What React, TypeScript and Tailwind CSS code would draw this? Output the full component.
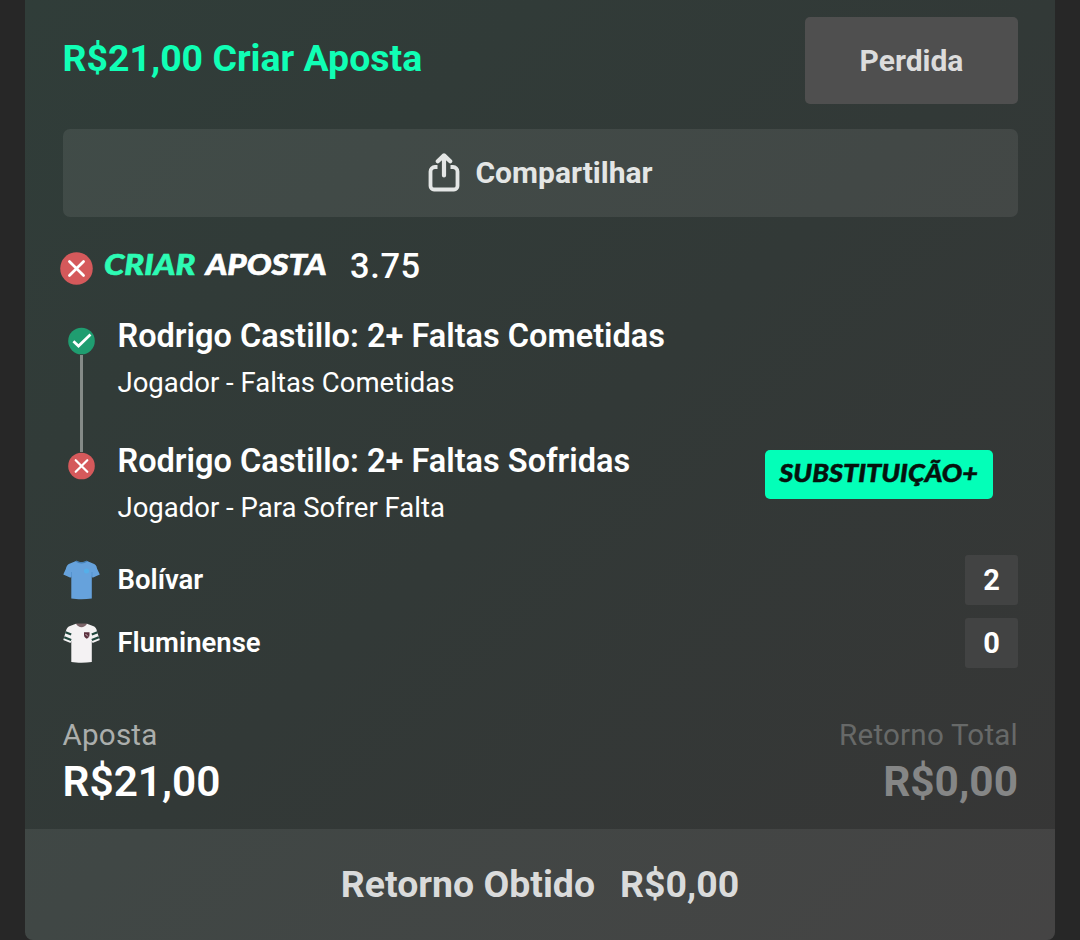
import React from 'react';

type Result = 'won' | 'lost';

interface Selection {
  title: string;
  market: string;
  result: Result;
  tag?: string;
}

const selections: Selection[] = [
  { title: 'Rodrigo Castillo: 2+ Faltas Cometidas', market: 'Jogador - Faltas Cometidas', result: 'won' },
  { title: 'Rodrigo Castillo: 2+ Faltas Sofridas', market: 'Jogador - Para Sofrer Falta', result: 'lost', tag: 'SUBSTITUIÇÃO+' },
];

const ResultIcon = ({ result, className }: { result: Result; className?: string }) => (
  <svg viewBox="0 0 28 28" fill="none" className={className}>
    <circle cx="14" cy="14" r="13.8" fill={result === 'won' ? '#1f9d70' : '#d5595b'} />
    {result === 'won' ? (
      <path d="M5.6 14.2l5.3 5 12.4-12" stroke="#fff" strokeWidth="2.8" />
    ) : (
      <path d="M8 8l12 12M20 8L8 20" stroke="#fff" strokeWidth="2.3" strokeLinecap="round" />
    )}
  </svg>
);

const ShareIcon = ({ className }: { className?: string }) => (
  <svg viewBox="0 0 32 40" fill="none" stroke="#e4e6e5" strokeWidth="3.8" className={className}>
    <path d="M9.5 14H7a4.5 4.5 0 0 0-4.5 4.5V33A3.5 3.5 0 0 0 6 36.500h20a3.5 3.5 0 0 0 3.500-3.500V18.500A4.500 4.500 0 0 0 25 14h-2.500" />
    <path d="M16 22.500V3.500M9.800 8.200L16 2.400l6.200 5.800" strokeWidth="4.200" strokeLinecap="round" strokeLinejoin="round" />
  </svg>
);

const BolivarShirt = () => (
  <svg viewBox="0 0 37 40" className="h-10 w-[37px]">
    <path d="M13 1L7 3.500C4.500 4.500 3.500 6 2.800 9L.3 14.500l7.200 3.200.8-1.500V38.500c6 1 14 1 20.500 0V16.200l.8 1.500 7.200-3.200L34 8.500C33.500 5.500 32.500 4.500 30 3.500L24 1c-3 1.500-8 1.500-11 0z" fill="#66a2dc" />
    <path d="M13 1c3 2.600 8 2.600 11 0" stroke="#4681b8" strokeWidth="1.200" fill="none" />
    <path d="M8.500 12v5M29 12v5" stroke="#4d8cc8" strokeWidth=".7" />
    <circle cx="23.500" cy="11" r="2.500" fill="#55afe9" />
  </svg>
);

const FluminenseShirt = () => (
  <svg viewBox="0 0 37 40" className="h-10 w-[37px]">
    <path d="M13 .8L7 3C4.500 4 3.500 5.500 2.800 8.500L.3 17l7.200 3 .8-2V39c6 1 14 1 20.500 0V18l.8 2 7.200-3L34 8.500C33.500 5.500 32.500 4 30 3L24 .8c-3 2-8 2-11 0z" fill="#f4f2f3" />
    <path d="M2.500 9.300l5.700 2.200M34.500 9.300l-5.700 2.200" stroke="#20473d" strokeWidth="2.300" />
    <path d="M1.200 14.300l7 2.700M35.800 14.300l-7 2.700" stroke="#20473d" strokeWidth="2.300" />
    <path d="M13 .6c2.500 5 8.500 5 11 0z" fill="#7b6468" />
    <path d="M21 9.300h5.500v2.700c0 1.800-1.200 2.900-2.700 3.700C22.200 14.900 21 13.800 21 12z" fill="#5b2f3d" />
    <path d="M22.500 11l2.500 2.500" stroke="#d8c9cc" strokeWidth=".9" />
  </svg>
);

const teams = [
  { name: 'Bolívar', score: 2, shirt: <BolivarShirt /> },
  { name: 'Fluminense', score: 0, shirt: <FluminenseShirt /> },
];

const App: React.FC = () => {
  return (
    <div className="h-[940px] w-[1080px] overflow-hidden bg-[#272727] px-[25px] font-['Roboto',sans-serif] text-white">
      <div className="flex h-full flex-col overflow-hidden rounded-b-lg bg-gradient-to-br from-[#303d39] via-[#323937] to-[#373636]">
        <div className="flex flex-1 flex-col pr-[37px] pl-[38px]">
          {/* Header */}
          <header className="mt-[17px] flex h-[87px] justify-between">
            <h1 className="mt-[17px] -ml-[0.5px] text-[37.450px] leading-[48px] font-bold whitespace-nowrap text-[#10ffb5]">R$21,00 Criar Aposta</h1>
            <div className="flex w-[213px] items-center justify-center rounded-[5px] bg-[#4f4f4f] text-[30px] font-bold text-[#dcdcdc]">
              Perdida
            </div>
          </header>

          <button className="mt-[25px] flex h-[88px] w-full shrink-0 items-center justify-center gap-[15px] rounded-[7px] bg-white/8 text-[30px] font-bold text-[#e4e6e5]">
            <ShareIcon className="h-10 w-8" />
            <span className="-mt-0.5">Compartilhar</span>
          </button>

          {/* Bet type and odds */}
          <div className="-ml-[3px] mt-[31px] flex h-10 items-center">
            <ResultIcon result="lost" className="size-[33px]" />
            <div className="-mt-2 ml-[11px] flex w-[222px] origin-left scale-x-[1.135] gap-[9px] font-['Lato',sans-serif] text-[29px] font-black italic [-webkit-text-stroke:0.6px]">
              <span className="text-[#2dfbb4]">CRIAR</span>
              <span>APOSTA</span>
            </div>
            <span className="-mt-0.5 ml-6 text-[34.500px] font-medium tracking-[0.600px]">3.75</span>
          </div>

          {/* Selections */}
          <div className="mt-[25px] flex flex-col">
            {selections.map((s, i) => (
              <div key={s.title} className={i === 0 ? 'flex h-[125px]' : 'flex h-[94px]'}>
                <div className="ml-[5px] flex w-[27px] flex-col items-center pt-[14px]">
                  <ResultIcon result={s.result} className="h-7 w-[27px] shrink-0" />
                  {i < selections.length - 1 && <div className="-mb-[14px] w-[3px] flex-1 bg-[#858b88]" />}
                </div>
                <div className="mt-px ml-[22.500px] flex-1 whitespace-nowrap">
                  <h2 className="text-[32.500px] leading-[44px] font-semibold">{s.title}</h2>
                  <p className="mt-1.5 text-[27.500px] leading-[38px]">{s.market}</p>
                </div>
                {s.tag && (
                  <div className="mt-3 mr-[25px] flex h-[49px] w-[228px] items-center justify-center rounded-[5px] bg-[#03ffb8] pb-[3px] text-[#06120d]">
                    <span className="scale-x-[1.085] font-['Lato',sans-serif] text-[25px] font-black italic [-webkit-text-stroke:0.5px]">{s.tag}</span>
                  </div>
                )}
              </div>
            ))}
          </div>

          {/* Score */}
          <div className="mt-[23px] flex flex-col gap-[13px]">
            {teams.map((team) => (
              <div key={team.name} className="flex h-[50px] items-center">
                {team.shirt}
                <span className="ml-[17.500px] flex-1 text-[27.500px] leading-[50px] font-semibold">{team.name}</span>
                <span className="h-[50px] w-[53px] rounded-[3px] bg-[#424343] text-center text-[29px] leading-[50px] font-bold">
                  {team.score}
                </span>
              </div>
            ))}
          </div>

          {/* Stake and return */}
          <div className="mt-[49px] flex justify-between whitespace-nowrap">
            <div>
              <p className="-ml-[0.5px] text-[29.600px] leading-[36px] tracking-[0.200px] text-[#abaeac]">Aposta</p>
              <p className="mt-0.5 -ml-[0.5px] text-[42.400px] leading-[54px] font-semibold">R$21,00</p>
            </div>
            <div className="text-right">
              <p className="text-[29.600px] leading-[36px] tracking-[0.200px] text-[#676968]">Retorno Total</p>
              <p className="mt-0.5 text-[42.400px] leading-[54px] font-bold text-[#858686]">R$0,00</p>
            </div>
          </div>
        </div>

        <footer className="flex h-[111px] shrink-0 items-center justify-center gap-[25px] bg-white/7 text-[37.450px] font-bold text-[#dadbdb]">
          <span>Retorno Obtido</span>
          <span>R$0,00</span>
        </footer>
      </div>
    </div>
  );
};

export default App;
